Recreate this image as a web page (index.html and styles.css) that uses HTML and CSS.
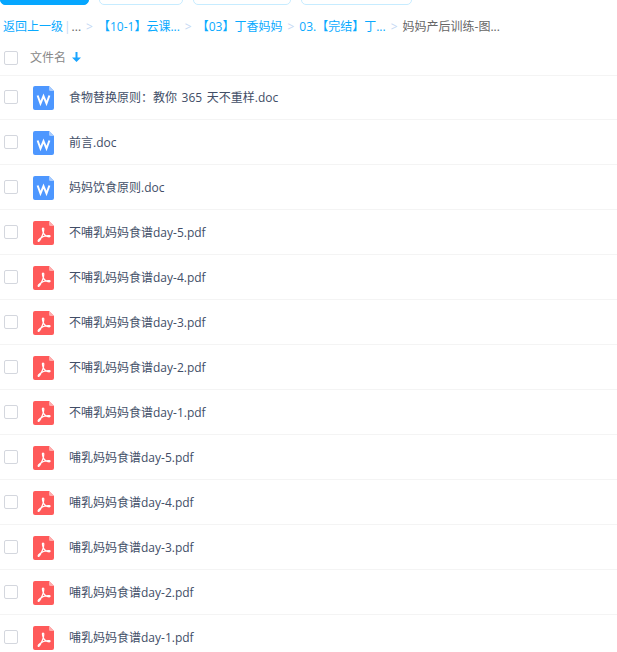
FILE: index.html
```html
<!DOCTYPE html>
<html>

<head>
    <meta charset="utf-8">
    <link rel="stylesheet" href="styles.css">
</head>

<body>
    <svg class="defs" width="0" height="0">
        <symbol id="icon-word" viewBox="0 0 21 24">
            <path d="M2 0H16L21 5V22a2 2 0 0 1-2 2H2a2 2 0 0 1-2-2V2a2 2 0 0 1 2-2z" fill="#4d97ff"/>
            <path d="M16 0L21 5H17.5a1.5 1.5 0 0 1-1.5-1.5z" fill="#a6cbff"/>
            <path d="M4.6 9.5L7.5 17.5L10.5 10.2L13.5 17.5L16.4 9.5" fill="none" stroke="#fff" stroke-width="2"/>
        </symbol>
        <symbol id="icon-pdf" viewBox="0 0 21 24">
            <path d="M2 0H16L21 5V22a2 2 0 0 1-2 2H2a2 2 0 0 1-2-2V2a2 2 0 0 1 2-2z" fill="#ff5a5a"/>
            <path d="M16 0L21 5H17.5a1.5 1.5 0 0 1-1.5-1.5z" fill="#ffacac"/>
            <path d="M10 7C9.2 7 9.2 9 10.2 11.5C11.2 14 13.5 15.6 16.2 15.8C17.4 15.8 17.4 14.7 16.2 14.6C13 14.3 8 16 5.5 19C4.6 20.2 5.5 20.7 6.4 19.8C8.5 17.2 10.8 11.5 10.8 8.4C10.8 7.4 10.5 7 10 7z" fill="none" stroke="#fff" stroke-width="1.2"/>
        </symbol>
    </svg>

    <div class="toolbar">
        <span class="btn btn-primary"></span>
        <span class="btn btn-w84"></span>
        <span class="btn btn-w98"></span>
        <span class="btn btn-w111"></span>
    </div>

    <div class="crumbs">
        <a class="crumb">返回上一级</a>
        <span class="bar">|</span>
        <span class="more">...</span>
        <span class="sep">&gt;</span>
        <a class="crumb">【10-1】云课...</a>
        <span class="sep">&gt;</span>
        <a class="crumb">【03】丁香妈妈</a>
        <span class="sep">&gt;</span>
        <a class="crumb">03.【完结】丁...</a>
        <span class="sep">&gt;</span>
        <span class="current">妈妈产后训练-图...</span>
    </div>

    <div class="list-head">
        <span class="check"></span>
        <span class="head-name">文件名</span>
        <svg class="sort" width="9" height="10" viewBox="0 0 9 10">
            <path d="M3.5 0H5.5V5.5H9L4.5 10L0 5.5H3.5z" fill="#1aa5ff"/>
        </svg>
    </div>

    <ul class="files">
        <li class="file"><span class="check"></span><svg class="icon"><use href="#icon-word"/></svg><span class="name">食物替换原则：教你 365 天不重样.doc</span></li>
        <li class="file"><span class="check"></span><svg class="icon"><use href="#icon-word"/></svg><span class="name">前言.doc</span></li>
        <li class="file"><span class="check"></span><svg class="icon"><use href="#icon-word"/></svg><span class="name">妈妈饮食原则.doc</span></li>
        <li class="file"><span class="check"></span><svg class="icon"><use href="#icon-pdf"/></svg><span class="name">不哺乳妈妈食谱day-5.pdf</span></li>
        <li class="file"><span class="check"></span><svg class="icon"><use href="#icon-pdf"/></svg><span class="name">不哺乳妈妈食谱day-4.pdf</span></li>
        <li class="file"><span class="check"></span><svg class="icon"><use href="#icon-pdf"/></svg><span class="name">不哺乳妈妈食谱day-3.pdf</span></li>
        <li class="file"><span class="check"></span><svg class="icon"><use href="#icon-pdf"/></svg><span class="name">不哺乳妈妈食谱day-2.pdf</span></li>
        <li class="file"><span class="check"></span><svg class="icon"><use href="#icon-pdf"/></svg><span class="name">不哺乳妈妈食谱day-1.pdf</span></li>
        <li class="file"><span class="check"></span><svg class="icon"><use href="#icon-pdf"/></svg><span class="name">哺乳妈妈食谱day-5.pdf</span></li>
        <li class="file"><span class="check"></span><svg class="icon"><use href="#icon-pdf"/></svg><span class="name">哺乳妈妈食谱day-4.pdf</span></li>
        <li class="file"><span class="check"></span><svg class="icon"><use href="#icon-pdf"/></svg><span class="name">哺乳妈妈食谱day-3.pdf</span></li>
        <li class="file"><span class="check"></span><svg class="icon"><use href="#icon-pdf"/></svg><span class="name">哺乳妈妈食谱day-2.pdf</span></li>
        <li class="file"><span class="check"></span><svg class="icon"><use href="#icon-pdf"/></svg><span class="name">哺乳妈妈食谱day-1.pdf</span></li>
    </ul>
</body>

</html>
```

FILE: styles.css
```css
html, body {
    height: 652px;
    overflow: hidden;
}

body {
    margin: 0;
    background-color: #fff;
    font-family: "Open Sans", "Noto Sans CJK SC", sans-serif;
    font-size: 12px;
    color: #424e67;
}

.defs {
    position: absolute;
}

/* Toolbar is scrolled mostly out of view, only the bottom edge shows */
.toolbar {
    display: flex;
    align-items: flex-end;
    gap: 10px;
    height: 5px;
    overflow: hidden;
}

.btn {
    flex: none;
    height: 30px;
    box-sizing: border-box;
    border-radius: 5px;
    border: 1px solid #c7ecff;
}

.btn-primary {
    width: 89px;
    background-color: #06a7ff;
    border-color: #06a7ff;
}

.btn-w84 {
    width: 84px;
}

.btn-w98 {
    width: 98px;
}

.btn-w111 {
    width: 111px;
}

.crumbs {
    display: flex;
    align-items: center;
    height: 20px;
    margin-top: 11px;
    padding-left: 3px;
    white-space: nowrap;
}

.crumb {
    color: #09aaff;
}

.bar {
    margin: 0 1px;
    color: #c4d8f4;
}

.more {
    color: #666;
}

.sep {
    margin: 0 5px;
    color: #c4d8f4;
}

.current {
    color: #666;
}

.list-head {
    display: flex;
    align-items: center;
    height: 39px;
    padding-left: 4px;
    border-bottom: 1px solid #f4f4f4;
    color: #888;
}

.list-head .check {
    margin-top: 4px;
}

.head-name {
    margin-left: 12px;
    margin-top: 2px;
}

.sort {
    margin-left: 6px;
    margin-top: 2px;
}

.check {
    flex: none;
    box-sizing: border-box;
    width: 14px;
    height: 14px;
    border: 1px solid #d4d7de;
    border-radius: 2px;
}

/* first row shares its top line with the header */
.files {
    margin: -1px 0 0;
    padding: 0;
    list-style: none;
}

.file {
    display: flex;
    align-items: center;
    height: 42px;
    padding: 2px 0 0 4px;
    border-bottom: 1px solid #f4f4f4;
}

.file .check {
    margin-top: -2px;
}

.icon {
    flex: none;
    width: 21px;
    height: 24px;
    margin-left: 15px;
}

.name {
    margin-left: 15px;
    margin-top: -2px;
    white-space: nowrap;
    word-spacing: 1.5px;
}
```
